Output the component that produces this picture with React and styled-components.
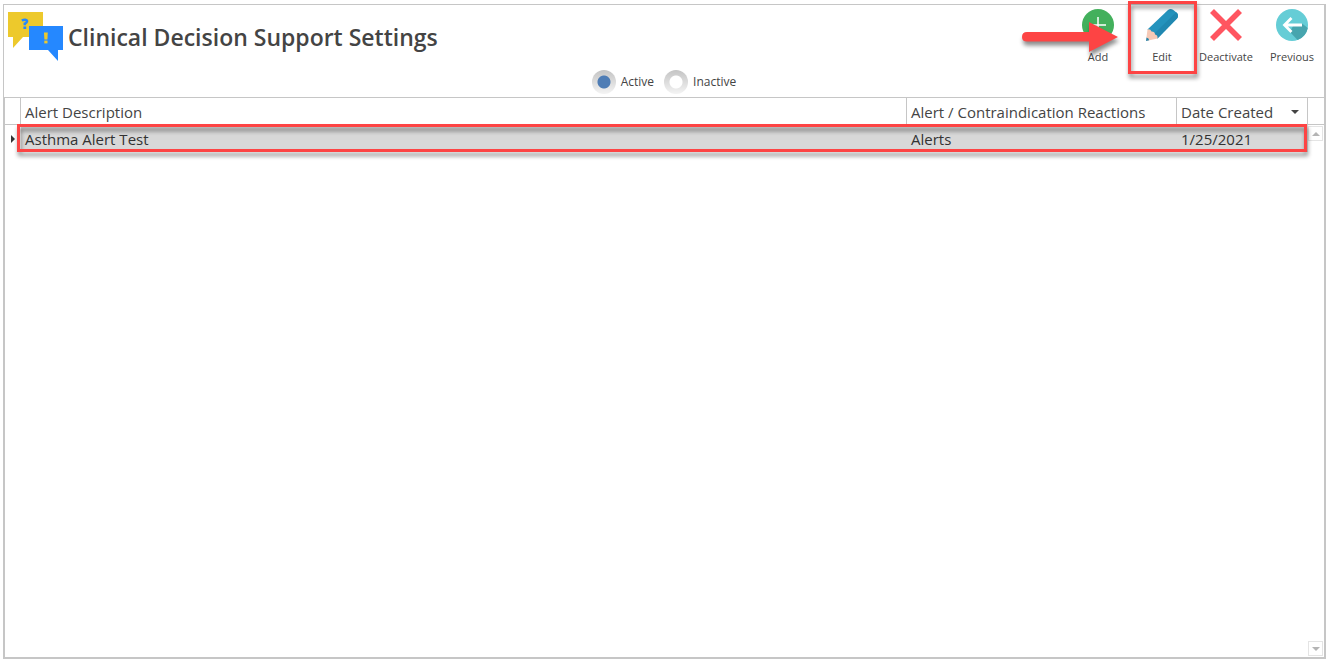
import { useState } from "react";
import styled, { createGlobalStyle } from "styled-components";

const alerts = [
    { id: 1, description: "Asthma Alert Test", reaction: "Alerts", created: "1/25/2021" },
];

const App = () => {
    const [status, setStatus] = useState("active")

    return (
        <>
            <GlobalStyle />
            <Page>
                <Panel>
                    <Header>
                        <Brand>
                            <AlertsLogo />
                            <Title>Clinical Decision Support Settings</Title>
                        </Brand>
                        <Toolbar>
                            <ToolButton type="button">
                                <AddIcon />
                                Add
                                <Arrow />
                            </ToolButton>
                            <ToolButton type="button">
                                <EditIcon />
                                Edit
                                <EditMark />
                            </ToolButton>
                            <ToolButton type="button">
                                <DeactivateIcon />
                                Deactivate
                            </ToolButton>
                            <ToolButton type="button">
                                <PreviousIcon />
                                Previous
                            </ToolButton>
                        </Toolbar>
                    </Header>

                    <Filter>
                        <RadioLabel>
                            <Radio name="status" checked={status === "active"} onChange={() => setStatus("active")} />
                            Active
                        </RadioLabel>
                        <RadioLabel>
                            <Radio name="status" checked={status === "inactive"} onChange={() => setStatus("inactive")} />
                            Inactive
                        </RadioLabel>
                    </Filter>

                    <Grid>
                        <TableArea>
                            <Table>
                                <colgroup>
                                    <Col $width="16px" />
                                    <Col />
                                    <Col $width="270px" />
                                    <Col $width="131px" />
                                </colgroup>
                                <thead>
                                    <tr>
                                        <HeadCell aria-label="Selected" />
                                        <HeadCell>Alert Description</HeadCell>
                                        <HeadCell>Alert / Contraindication Reactions</HeadCell>
                                        <HeadCell aria-sort="descending">
                                            <SortLabel>Date Created <Triangle $dir="down" $size={4} $color="#444" /></SortLabel>
                                        </HeadCell>
                                    </tr>
                                </thead>
                                <tbody>
                                    {alerts.map((alert) => (
                                        <Row key={alert.id}>
                                            <MarkerCell>
                                                <Triangle $dir="right" $size={4} $color="#333" />
                                                <RowMark />
                                            </MarkerCell>
                                            <Cell>{alert.description}</Cell>
                                            <Cell>{alert.reaction}</Cell>
                                            <Cell>{alert.created}</Cell>
                                        </Row>
                                    ))}
                                </tbody>
                            </Table>
                        </TableArea>
                        <ScrollColumn>
                            <ScrollHead />
                            <ScrollButton type="button" aria-label="Scroll up">
                                <Triangle $dir="up" $size={4} $color="#b4b4b4" />
                            </ScrollButton>
                            <ScrollTrack />
                            <ScrollButton type="button" aria-label="Scroll down">
                                <Triangle $dir="down" $size={4} $color="#b4b4b4" />
                            </ScrollButton>
                        </ScrollColumn>
                    </Grid>
                </Panel>
            </Page>
        </>
    );
};

export default App;

// icons

const AlertsLogo = () => (
    <svg width="56" height="50" viewBox="0 0 56 50" aria-hidden="true">
        <path d="M0 0H35V25H15L5 36V25H0Z" fill="#edc92c" />
        <path d="M21 14H55V38H50V49L40 38H21Z" fill="#2588ff" />
        <path d="M13.800 8.500Q15.500 7.600 17.200 7.700Q19.200 8 19 9.600Q18.600 10.800 16.800 11.600V13.200" fill="none" stroke="#2588ff" strokeWidth="2.500" />
        <rect x="15.400" y="14.500" width="2.800" height="2.500" fill="#2588ff" />
        <path d="M36 20.500H39.800L39.400 27.600H36.400Z" fill="#edc92c" />
        <rect x="36.300" y="28.600" width="3.200" height="2.800" fill="#edc92c" />
    </svg>
)

const AddIcon = () => (
    <svg width="32" height="32" viewBox="0 0 32 32" aria-hidden="true">
        <circle cx="16" cy="16" r="16" fill="#43b05c" />
        <path d="M16 8V24M8 16H24" stroke="#fff" strokeWidth="1.500" />
    </svg>
)

const EditIcon = () => (
    <svg width="32" height="32" viewBox="0 0 32 32" aria-hidden="true">
        <path d="M1.500 20.500L22 1Q24.500 -0.800 27 0.800L31 4Q33 6.500 31 9.500L11.500 29.500Z" fill="#2493bd" />
        <path d="M8 25L30 3.200L31 4Q33 6.500 31 9.500L11.500 29.500Z" fill="#2088b1" />
        <path d="M1.500 20.500Q4.500 19.800 5.500 22.500Q9 22.500 9 25.500Q12 26 11.500 29.500L0 32Z" fill="#f6c9b6" />
        <path d="M0.500 28.500Q3 29 3.200 31.300L0 32Z" fill="#2586ad" />
    </svg>
)

const DeactivateIcon = () => (
    <svg width="32" height="32" viewBox="0 0 32 32" aria-hidden="true">
        <path d="M2 2L30 30M30 2L2 30" stroke="#ff5560" strokeWidth="5.6" />
    </svg>
)

const PreviousIcon = () => (
    <svg width="32" height="32" viewBox="0 0 32 32" aria-hidden="true">
        <circle cx="16" cy="16" r="16" fill="#65cdd6" />
        <path d="M14 23L21.500 31A16 16 0 0 0 31.800 19L26 14.500L17 17Z" fill="#47a5ae" />
        <path d="M26 16H9M15.500 9L8.500 16L15.500 23" fill="none" stroke="#fff" strokeWidth="2.800" />
    </svg>
)

const Arrow = () => (
    <ArrowSvg width="96" height="32" viewBox="0 0 96 32" aria-hidden="true">
        <path d="M5 11H67V1L96 16L67 31V20.500H5Q0 20.500 0 16Q0 11 5 11Z" fill="#fd4444" />
    </ArrowSvg>
)

// styles

const GlobalStyle = createGlobalStyle`
    * {
        box-sizing: border-box;
    }
    body {
        margin: 0;
        background-color: white;
        color: #444;
        font-family: "Segoe UI", "Open Sans", "Noto Sans", sans-serif;
    }
`

const Page = styled.main`
    display: flex;
    min-height: 100vh;
    padding: 4px 3px;
`

const Panel = styled.section`
    flex: 1;
    display: flex;
    flex-direction: column;
    border: 1px solid #c6c6c6;
    border-right-width: 2px;
    border-bottom-width: 2px;
`

const Header = styled.header`
    display: flex;
    justify-content: space-between;
    height: 62px;
`

const Brand = styled.div`
    display: flex;
    gap: 4px;
    padding: 7px 0 0 4px;
`

const Title = styled.h1`
    margin: 0;
    font-size: 23px;
    font-weight: 600;
    line-height: 50px;
`

const Toolbar = styled.div`
    display: flex;
`

const ToolButton = styled.button`
    position: relative;
    display: flex;
    flex-direction: column;
    align-items: center;
    gap: 8px;
    width: 64px;
    padding: 4px 0 0;
    border: none;
    background-color: transparent;
    color: #444;
    font-family: inherit;
    font-size: 11px;
    line-height: 16px;
    white-space: nowrap;
    cursor: pointer;

    &:last-child {
        margin-left: 2px;
    }
`

const ArrowSvg = styled.svg`
    position: absolute;
    top: 16px;
    right: 12px;
    z-index: 1;
    filter: drop-shadow(1px 4px 2px rgba(0, 0, 0, 0.45));
`

const EditMark = styled.span`
    position: absolute;
    top: -4px;
    left: -2px;
    width: 69px;
    height: 73px;
    border: 3px solid #fd4444;
    filter: drop-shadow(1px 4px 2px rgba(0, 0, 0, 0.45));
    pointer-events: none;
`

const Filter = styled.div`
    display: flex;
    justify-content: center;
    gap: 10px;
    height: 30px;
`

const RadioLabel = styled.label`
    display: flex;
    align-items: center;
    gap: 5px;
    font-size: 12px;
    line-height: 16px;
`

const Radio = styled.input.attrs({ type: "radio" })`
    appearance: none;
    width: 24px;
    height: 24px;
    margin: 0;
    border-radius: 50%;
    background: radial-gradient(circle, white 6px, transparent 7px), linear-gradient(#c4c4c4, #f4f4f4);

    &:checked {
        background: radial-gradient(circle, #4f7db5 6px, transparent 7px), linear-gradient(#c4c4c4, #f4f4f4);
    }
`

const Grid = styled.div`
    flex: 1;
    display: flex;
    border-top: 1px solid #c6c6c6;
    border-left: 1px solid #c6c6c6;
`

const TableArea = styled.div`
    flex: 1;
`

const Table = styled.table`
    width: 100%;
    table-layout: fixed;
    border-collapse: separate;
    border-spacing: 0;
    font-size: 15px;
`

const Col = styled.col`
    width: ${({ $width }) => $width || "auto"};
`

const HeadCell = styled.th`
    height: 27px;
    padding: 2px 4px 0;
    border-right: 1px solid #c6c6c6;
    border-bottom: 1px solid #c6c6c6;
    font-weight: 400;
    line-height: 24px;
    text-align: left;
    white-space: nowrap;

    &:first-child {
        padding: 0;
    }
`

const SortLabel = styled.span`
    display: flex;
    align-items: center;
    justify-content: space-between;
    padding-right: 4px;
`

const Row = styled.tr`
    position: relative;
`

const Cell = styled.td`
    height: 27px;
    padding: 2px 4px 0;
    background-color: #d8d8d8;
    color: #333;
    line-height: 25px;
`

const MarkerCell = styled.td`
    padding: 0 0 0 6px;
`

const RowMark = styled.span`
    position: absolute;
    top: -1px;
    right: 1px;
    bottom: 0;
    left: 12px;
    border: 3px solid #fd4444;
    filter: drop-shadow(1px 4px 2px rgba(0, 0, 0, 0.45));
    pointer-events: none;
`

const Triangle = styled.span`
    display: block;
    width: 0;
    height: 0;
    border: ${({ $size }) => $size}px solid transparent;
    ${({ $dir, $color }) => $dir === "right" && `border-left-color: ${$color}; border-right-width: 0;`}
    ${({ $dir, $color }) => $dir === "down" && `border-top-color: ${$color}; border-bottom-width: 0;`}
    ${({ $dir, $color }) => $dir === "up" && `border-bottom-color: ${$color}; border-top-width: 0;`}
`

const ScrollColumn = styled.div`
    display: flex;
    flex-direction: column;
    width: 16px;
`

const ScrollHead = styled.div`
    height: 27px;
    border-bottom: 1px solid #c6c6c6;
`

const ScrollTrack = styled.div`
    flex: 1;
`

const ScrollButton = styled.button`
    display: flex;
    align-items: center;
    justify-content: center;
    width: 15px;
    height: 15px;
    margin: 1px 0;
    padding: 0;
    border: 1px solid #e4e4e4;
    background-color: white;
`
